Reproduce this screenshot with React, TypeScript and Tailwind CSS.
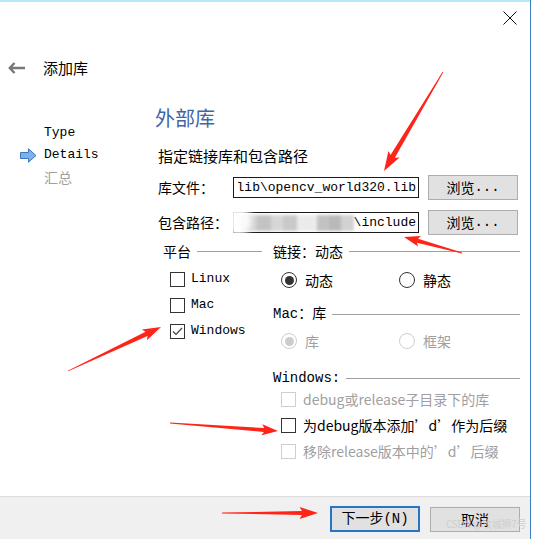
const cjk = "font-['Noto_Sans_CJK_SC',sans-serif]";
const mono = "font-['Liberation_Mono','Noto_Sans_CJK_SC',monospace]";
const red = "#ff2418";

type Pt = [number, number];

// red annotation arrow: thin tail, wider shaft, triangular head
function Arrow({ t, p, head = 15, hw = 12, sw = 4.5 }: { t: Pt; p: Pt; head?: number; hw?: number; sw?: number }) {
  const dx = p[0] - t[0];
  const dy = p[1] - t[1];
  const len = Math.hypot(dx, dy);
  const ux = dx / len;
  const uy = dy / len;
  const nx = -uy;
  const ny = ux;
  const b: Pt = [p[0] - ux * head, p[1] - uy * head];
  const w: Pt = [p[0] - ux * head * 1.15, p[1] - uy * head * 1.15];
  const pts: Pt[] = [
    [t[0] + nx * 0.4, t[1] + ny * 0.4],
    [b[0] + (nx * sw) / 2, b[1] + (ny * sw) / 2],
    [w[0] + (nx * hw) / 2, w[1] + (ny * hw) / 2],
    p,
    [w[0] - (nx * hw) / 2, w[1] - (ny * hw) / 2],
    [b[0] - (nx * sw) / 2, b[1] - (ny * sw) / 2],
    [t[0] - nx * 0.4, t[1] - ny * 0.4],
  ];
  return <polygon points={pts.map((q) => q.join(",")).join(" ")} fill={red} />;
}

function Check({ checked = false, disabled = false }) {
  return (
    <span
      className={`w-[15px] h-[15px] border bg-white flex items-center justify-center shrink-0 ${
        disabled ? "border-[#cfcfcf]" : "border-[#333333]"
      }`}
    >
      {checked && (
        <svg width="11" height="9" viewBox="0 0 11 9">
          <path d="M1 4.5 L4 7.5 L10 1" fill="none" stroke="#444" strokeWidth="1.2" />
        </svg>
      )}
    </span>
  );
}

function Radio({ on = false, disabled = false }) {
  return (
    <span
      className={`w-[16px] h-[16px] rounded-full border bg-white flex items-center justify-center shrink-0 ${
        disabled ? "border-[#cfcfcf]" : "border-[#333333]"
      }`}
    >
      {on && <span className={`w-[9px] h-[9px] rounded-full ${disabled ? "bg-[#cccccc]" : "bg-[#333333]"}`} />}
    </span>
  );
}

function GroupTitle({ label, font }: { label: string; font: string }) {
  return (
    <div className="h-[16px] flex items-center gap-[6px]">
      <span className={`${font} text-[14px] leading-none whitespace-nowrap text-black`}>{label}</span>
      <span className="flex-1 h-px bg-[#a0a0a0]" />
    </div>
  );
}

const Browse = () => (
  <button className="ml-[9px] w-[90px] h-[25px] border border-[#adadad] bg-[#e1e1e1] flex items-center justify-center text-[14px] text-black">
    <span className={cjk}>浏览</span>
    <span className={mono}>...</span>
  </button>
);

const mosaic = [
  ["w-[16px]", "bg-[#cfcfcf]"],
  ["w-[14px]", "bg-[#c3c3c3]"],
  ["w-[12px]", "bg-[#d7d7d7]"],
  ["w-[14px]", "bg-[#c9c9c9]"],
  ["w-[20px]", "bg-[#ebebeb]"],
  ["w-[12px]", "bg-[#c2c2c2]"],
  ["w-[12px]", "bg-[#b9b9b9]"],
  ["w-[13px]", "bg-[#d2d2d2]"],
];

export default function App() {
  return (
    <div className="w-[533px] h-[539px] bg-white relative overflow-hidden text-black">
      <div className="w-[531px] h-full border-r border-[#3a82c2] flex flex-col">
        <div className="h-[2px] bg-[#b4ecf6] shrink-0" />

        {/* close */}
        <div className="h-[32px] flex items-center justify-end pr-[13px] shrink-0">
          <svg width="14" height="14" viewBox="0 0 14 14">
            <path d="M0.5 0.5 L13.5 13.5 M13.5 0.5 L0.5 13.5" stroke="#111" strokeWidth="1" />
          </svg>
        </div>

        {/* title */}
        <div className="h-[68px] flex items-center pl-[8px] shrink-0">
          <svg width="17" height="12" viewBox="0 0 17 12">
            <path d="M6.5 1 L1.8 6 L6.5 11 M2 6 H17" fill="none" stroke="#777" strokeWidth="2.4" />
          </svg>
          <span className={`${cjk} ml-[18px] text-[15px]`}>添加库</span>
        </div>

        {/* body */}
        <div className="flex flex-1">
          {/* wizard steps */}
          <div className={`w-[155px] pt-[20px] ${mono} text-[13px]`}>
            <div className="h-[22px] flex items-center pl-[44px]">Type</div>
            <div className="h-[22px] flex items-center pl-[20px]">
              <svg width="17" height="15" viewBox="0 0 17 15">
                <path d="M0.5 4.5 H8.5 V0.8 L16 7.5 L8.5 14.2 V10.5 H0.5 Z" fill="#7db1ea" stroke="#3c78c0" strokeWidth="1" />
              </svg>
              <span className="ml-[7px]">Details</span>
            </div>
            <div className={`h-[22px] flex items-center pl-[44px] ${cjk} text-[#a0a0a0] text-[14px]`}>汇总</div>
          </div>

          {/* page */}
          <div className="flex-1 pr-[10px]">
            <div className={`h-[32px] flex items-center ${cjk} text-[20px] text-[#3f66a6]`}>外部库</div>
            <div className={`mt-[10px] h-[24px] flex items-center pl-[3px] ${cjk} text-[15px]`}>指定链接库和包含路径</div>

            <div className="mt-[7px] h-[25px] flex items-center">
              <span className={`w-[78px] pl-[3px] ${cjk} text-[14px]`}>库文件：</span>
              <div className={`w-[186px] h-[21px] border border-[#1a1a1a] flex items-center justify-end pr-[2px] ${mono} text-[13px] overflow-hidden whitespace-nowrap`}>
                lib\opencv_world320.lib
              </div>
              <Browse />
            </div>

            <div className="mt-[10px] h-[25px] flex items-center">
              <span className={`w-[78px] pl-[3px] ${cjk} text-[14px]`}>包含路径：</span>
              <div className={`w-[186px] h-[21px] border border-[#1a1a1a] flex items-center justify-end pr-[2px] ${mono} text-[13px] overflow-hidden whitespace-nowrap`}>
                <div className="flex h-[16px] blur-[1.5px]">
                  {mosaic.map(([w, c], i) => (
                    <span key={i} className={`${w} ${c} h-full`} />
                  ))}
                </div>
                <span>\include</span>
              </div>
              <Browse />
            </div>

            <div className="mt-[8px] flex pl-[8px] gap-[11px]">
              {/* platform */}
              <div className="w-[99px]">
                <GroupTitle label="平台" font={cjk} />
                <div className={`pt-[7px] ${mono} text-[13px]`}>
                  {["Linux", "Mac", "Windows"].map((n) => (
                    <div key={n} className="h-[26px] flex items-center pl-[7px] gap-[6px]">
                      <Check checked={n === "Windows"} />
                      <span>{n}</span>
                    </div>
                  ))}
                </div>
              </div>

              {/* linkage / mac / windows */}
              <div className="flex-1">
                <GroupTitle label="链接：动态" font={cjk} />
                <div className={`mt-[8px] h-[26px] flex items-center pl-[8px] ${cjk} text-[14px]`}>
                  <div className="w-[118px] flex items-center gap-[8px]">
                    <Radio on />
                    <span>动态</span>
                  </div>
                  <div className="flex items-center gap-[8px]">
                    <Radio />
                    <span>静态</span>
                  </div>
                </div>

                <div className="mt-[13px]">
                  <GroupTitle label="Mac：库" font={mono} />
                </div>
                <div className={`mt-[6px] h-[26px] flex items-center pl-[8px] ${cjk} text-[14px] text-[#a0a0a0]`}>
                  <div className="w-[118px] flex items-center gap-[8px]">
                    <Radio on disabled />
                    <span>库</span>
                  </div>
                  <div className="flex items-center gap-[8px]">
                    <Radio disabled />
                    <span>框架</span>
                  </div>
                </div>

                <div className="mt-[16px]">
                  <GroupTitle label="Windows:" font={mono} />
                </div>
                <div className={`${cjk} text-[14px]`}>
                  <div className="h-[26px] flex items-center pl-[8px] gap-[7px] text-[#a0a0a0]">
                    <Check disabled />
                    <span>debug或release子目录下的库</span>
                  </div>
                  <div className="h-[26px] flex items-center pl-[8px] gap-[7px]">
                    <Check />
                    <span>为debug版本添加’d’作为后缀</span>
                  </div>
                  <div className="h-[26px] flex items-center pl-[8px] gap-[7px] text-[#a0a0a0]">
                    <Check disabled />
                    <span>移除release版本中的’d’后缀</span>
                  </div>
                </div>
              </div>
            </div>
          </div>
        </div>

        {/* footer */}
        <div className="h-[43px] shrink-0 border-t border-[#dcdcdc] bg-[#f0f0f0] flex justify-end items-start pt-[9px] pr-[10px] gap-[10px]">
          <button className={`w-[90px] h-[26px] border-2 border-[#2a74c4] bg-[#e1e1e1] flex items-center justify-center ${mono} text-[14px]`}>
            下一步(N)
          </button>
          <button className={`mt-[1px] w-[90px] h-[25px] border border-[#adadad] bg-[#e1e1e1] flex items-center justify-center ${cjk} text-[14px]`}>
            取消
          </button>
        </div>
      </div>

      {/* blur smear over the include path */}
      <div className="absolute left-[224px] top-[206px] w-[28px] h-[30px] rounded-full bg-white blur-[3px] opacity-90" />

      {/* watermark */}
      <div className={`absolute left-[446px] top-[519px] ${cjk} text-[10px] leading-none tracking-[-0.3px] text-[#cfcfcf] whitespace-nowrap`}>
        CSDN @攻城狮7号
      </div>

      {/* annotations */}
      <svg className="absolute inset-0 pointer-events-none" width="533" height="539">
        <Arrow t={[443, 72]} p={[384, 171]} head={17} hw={13} sw={5} />
        <Arrow t={[462, 253]} p={[404, 237]} head={14} hw={11} sw={4} />
        <Arrow t={[68, 371]} p={[161, 327]} head={16} hw={12} sw={4.5} />
        <Arrow t={[170, 423]} p={[278, 431]} head={14} hw={11} sw={4} />
        <Arrow t={[222, 513]} p={[318, 513]} head={16} hw={12} sw={4} />
      </svg>
    </div>
  );
}
